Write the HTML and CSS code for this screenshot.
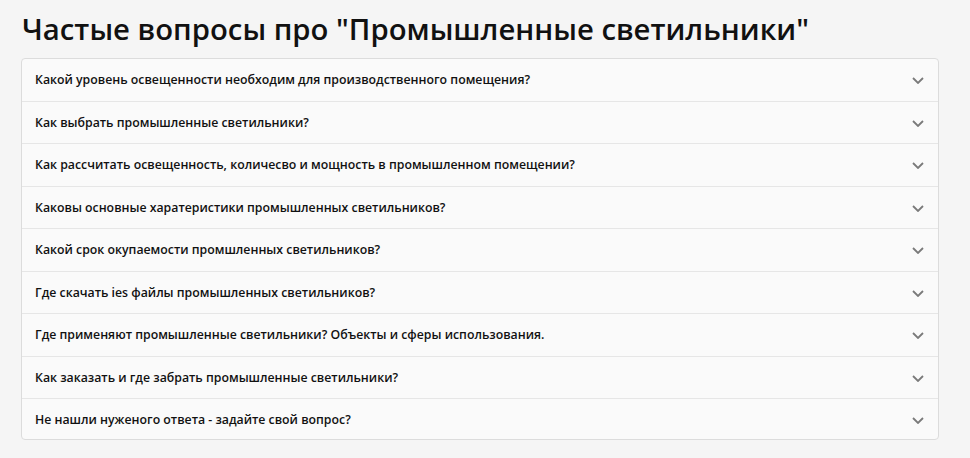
FILE: index.html
```html
<!DOCTYPE html>
<html lang="ru">
<head>
<meta charset="utf-8">
<link rel="stylesheet" href="styles.css">
</head>
<body>
<main class="faq">
  <h2 class="faq-title">Частые вопросы про "Промышленные светильники"</h2>
  <div class="faq-list">
    <div class="faq-item"><span class="faq-q">Какой уровень освещенности необходим для производственного помещения?</span><svg class="chev" viewBox="0 0 12 7" width="12" height="7"><path d="M1 1l5 5 5-5"/></svg></div>
    <div class="faq-item"><span class="faq-q">Как выбрать промышленные светильники?</span><svg class="chev" viewBox="0 0 12 7" width="12" height="7"><path d="M1 1l5 5 5-5"/></svg></div>
    <div class="faq-item"><span class="faq-q">Как рассчитать освещенность, количесво и мощность в промышленном помещении?</span><svg class="chev" viewBox="0 0 12 7" width="12" height="7"><path d="M1 1l5 5 5-5"/></svg></div>
    <div class="faq-item"><span class="faq-q">Каковы основные харатеристики промышленных светильников?</span><svg class="chev" viewBox="0 0 12 7" width="12" height="7"><path d="M1 1l5 5 5-5"/></svg></div>
    <div class="faq-item"><span class="faq-q">Какой срок окупаемости промшленных светильников?</span><svg class="chev" viewBox="0 0 12 7" width="12" height="7"><path d="M1 1l5 5 5-5"/></svg></div>
    <div class="faq-item"><span class="faq-q">Где скачать ies файлы промышленных светильников?</span><svg class="chev" viewBox="0 0 12 7" width="12" height="7"><path d="M1 1l5 5 5-5"/></svg></div>
    <div class="faq-item"><span class="faq-q">Где применяют промышленные светильники? Объекты и сферы использования.</span><svg class="chev" viewBox="0 0 12 7" width="12" height="7"><path d="M1 1l5 5 5-5"/></svg></div>
    <div class="faq-item"><span class="faq-q">Как заказать и где забрать промышленные светильники?</span><svg class="chev" viewBox="0 0 12 7" width="12" height="7"><path d="M1 1l5 5 5-5"/></svg></div>
    <div class="faq-item"><span class="faq-q">Не нашли нуженого ответа - задайте свой вопрос?</span><svg class="chev" viewBox="0 0 12 7" width="12" height="7"><path d="M1 1l5 5 5-5"/></svg></div>
  </div>
</main>
</body>
</html>
```
FILE: styles.css
```css
html, body {
  margin: 0;
  padding: 0;
  background: #f5f5f5;
}
body {
  font-family: "Open Sans", "Noto Sans", sans-serif;
  color: #111;
}
.faq {
  padding: 8px 31px 0 21px;
}
.faq-title {
  margin: 0 0 8px 1px;
  font-size: 29.3px;
  font-weight: 600;
  line-height: 42px;
  color: #111;
}
.faq-list {
  background: #fafafa;
  border: 1px solid #dcdcdc;
  border-radius: 4px;
}
.faq-item {
  display: flex;
  align-items: center;
  justify-content: space-between;
  height: 41.5px;
  padding: 0 14px 0 13px;
  border-bottom: 1px solid #e6e6e6;
}
.faq-item:last-child {
  border-bottom: none;
  height: 40px;
}
.faq-q {
  font-size: 12.3px;
  font-weight: 600;
  color: #111;
}
.chev {
  fill: none;
  stroke: #7a7a7a;
  stroke-width: 1.8;
  margin-top: 2px;
}
```
